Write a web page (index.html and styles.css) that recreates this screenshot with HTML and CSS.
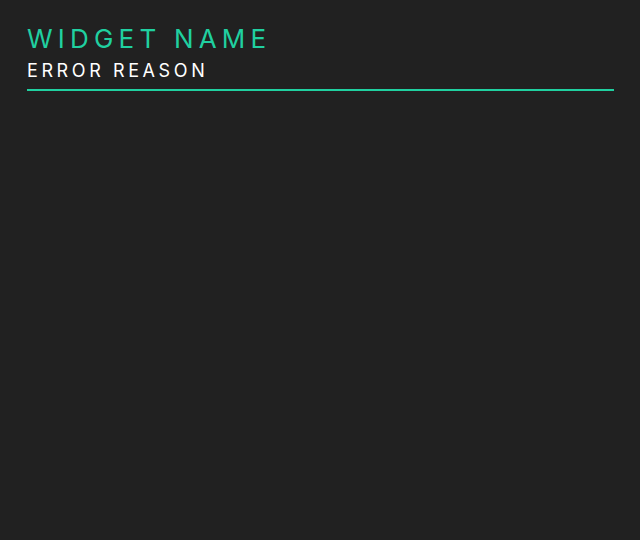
FILE: index.html
```html
<!DOCTYPE html>
<html>
<head>
<meta charset="utf-8">
<link rel="stylesheet" href="styles.css">
</head>
<body>
<div class="widget">
  <header class="widget-header">
    <h1 class="widget-title">WIDGET NAME</h1>
    <p class="widget-error">ERROR REASON</p>
  </header>
</div>
</body>
</html>
```
FILE: styles.css
```css
html, body {
  margin: 0;
  padding: 0;
  background: #212121;
  height: 100%;
}
.widget {
  padding: 20px 26px 0 27px;
  font-family: Inter, "Noto Sans", sans-serif;
}
.widget-header {
  border-bottom: 2px solid #20d0a0;
  padding-bottom: 5px;
}
.widget-title {
  margin: 0;
  font-size: 26px;
  font-weight: 400;
  letter-spacing: 0.2em;
  color: #20d0a0;
  line-height: 38px;
}
.widget-error {
  margin: 0;
  font-size: 18px;
  font-weight: 400;
  letter-spacing: 0.2em;
  color: #ffffff;
  line-height: 26px;
}
```
